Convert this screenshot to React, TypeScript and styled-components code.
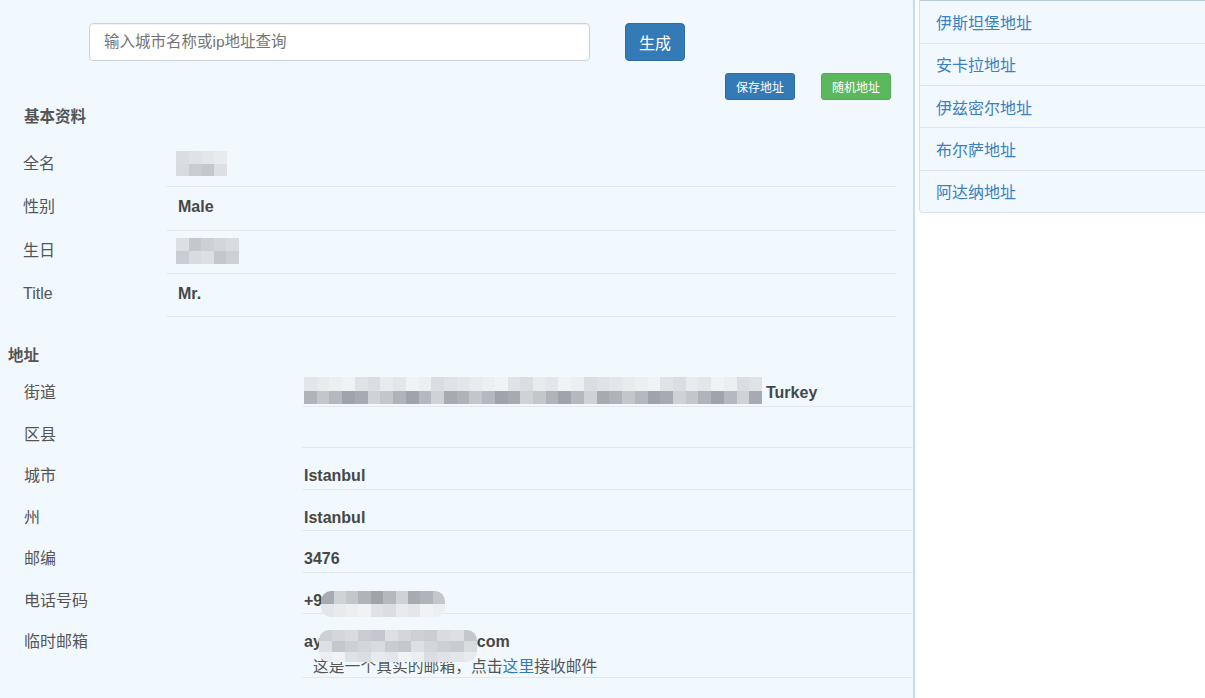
import styled, { createGlobalStyle } from 'styled-components';

const GlobalStyle = createGlobalStyle`
  html, body {
    margin: 0;
    padding: 0;
    background: #ffffff;
  }

  body {
    font-family: 'Liberation Sans', 'Noto Sans CJK SC', sans-serif;
    color: #555555;
  }

  * {
    box-sizing: border-box;
  }
`;

const palettes = {
  light: ['#e3e6ea', '#eceff2', '#dfe2e6', '#e8ebee', '#f0f3f6', '#dadde2'],
  mid: ['#d3d6db', '#c9ccd2', '#dcdfe3', '#cdd0d5', '#d8dbe0', '#c4c7cd'],
  dark: ['#b5b8be', '#a7aab1', '#c3c6cb', '#9fa3aa', '#cfd2d6', '#b0b3b9'],
};

type PaletteName = keyof typeof palettes;

const pickShade = (palette: PaletteName, seed: number) => {
  const list = palettes[palette];
  return list[(seed * 7 + 3) % list.length];
};

interface MosaicProps {
  width: number
  height: number
  lineHeight?: number
  top?: number
  shift?: number
  cols: number
  rows: PaletteName[]
  rounded?: boolean
  seed?: number
}

// pixelated redaction over private data
const Mosaic = ({ width, height, lineHeight = 22, top = 0, shift = 0, cols, rows, rounded, seed = 1 }: MosaicProps) => (
  <MosaicSlot $width={width} $lineHeight={lineHeight} $shift={shift}>
    <MosaicGrid $cols={cols} $rows={rows.length} $height={height} $top={top} $rounded={rounded}>
      {rows.map((palette, r) => Array.from({ length: cols }).map((_, c) => (
        <MosaicCell key={`${r}-${c}`} $shade={pickShade(palette, c * 3 + r * 5 + seed + Math.floor(c / 2))} />
      )))}
    </MosaicGrid>
  </MosaicSlot>
);

const basicRows = [
  { label: '全名', value: 'name' },
  { label: '性别', value: 'Male' },
  { label: '生日', value: 'birthday' },
  { label: 'Title', value: 'Mr.' },
];

const cities = ['伊斯坦堡地址', '安卡拉地址', '伊兹密尔地址', '布尔萨地址', '阿达纳地址'];

export default function App() {
  return (
    <>
      <GlobalStyle />
      <Page>
        <Main>
          <SearchBar>
            <SearchInput placeholder="输入城市名称或ip地址查询" />
            <PrimaryButton type="button">生成</PrimaryButton>
          </SearchBar>

          <ActionRow>
            <SmallButton type="button" $variant="primary">保存地址</SmallButton>
            <SmallButton type="button" $variant="success">随机地址</SmallButton>
          </ActionRow>

          <SectionTitle $indent={24} $gap={4}>基本资料</SectionTitle>
          <InfoTable $labelWidth={166} $right={17}>
            {basicRows.map(row => (
              <InfoRow key={row.label}>
                <Label $indent={23}>{row.label}</Label>
                <BasicValue>
                  {row.value === 'name' && (
                    <Mosaic width={51} height={25} top={-2} shift={-2} cols={4} rows={['light', 'mid']} seed={2} />
                  )}
                  {row.value === 'birthday' && (
                    <Mosaic width={63} height={26} top={-2} shift={-2} cols={5} rows={['mid', 'mid']} seed={5} />
                  )}
                  {row.value !== 'name' && row.value !== 'birthday' && row.value}
                </BasicValue>
              </InfoRow>
            ))}
          </InfoTable>

          <SectionTitle $indent={8} $gap={26}>地址</SectionTitle>
          <AddressTable>
            <AddressRow>
              <Label $indent={24}>街道</Label>
              <AddressValue>
                <Mosaic width={458} height={27} top={-5} cols={36} rows={['light', 'dark']} seed={3} />
                <Shifted>Turkey</Shifted>
              </AddressValue>
            </AddressRow>
            <AddressRow>
              <Label $indent={24}>区县</Label>
              <AddressValue />
            </AddressRow>
            <AddressRow>
              <Label $indent={24}>城市</Label>
              <AddressValue>Istanbul</AddressValue>
            </AddressRow>
            <AddressRow>
              <Label $indent={24}>州</Label>
              <AddressValue>Istanbul</AddressValue>
            </AddressRow>
            <AddressRow>
              <Label $indent={24}>邮编</Label>
              <AddressValue>3476</AddressValue>
            </AddressRow>
            <AddressRow>
              <Label $indent={24}>电话号码</Label>
              <AddressValue>
                +90
                <Mosaic width={124} height={26} top={1} shift={-10} cols={10} rows={['dark', 'light']} rounded seed={4} />
              </AddressValue>
            </AddressRow>
            <AddressRow $tall>
              <Label $indent={24}>临时邮箱</Label>
              <AddressValue>
                <div>
                  ay
                  <Mosaic width={158} height={32} top={-1} shift={-3} cols={12} rows={['mid', 'mid', 'light']} rounded seed={6} />
                  com
                </div>
                <MailHint>
                  这是一个真实的邮箱，点击<HintLink href="#">这里</HintLink>接收邮件
                </MailHint>
              </AddressValue>
            </AddressRow>
          </AddressTable>
        </Main>

        <Side>
          <CityList>
            {cities.map(city => (
              <CityItem key={city}>
                <CityLink href="#">{city}</CityLink>
              </CityItem>
            ))}
          </CityList>
        </Side>
      </Page>
    </>
  );
}

const Page = styled.div`
  display: flex;
  min-height: 698px;
  overflow: hidden;
`;

const Main = styled.div`
  background-color: #f1f8fe;
  border-right: 2px solid #c3ddf2;
  flex: 0 0 915px;
  min-height: 698px;
  padding-top: 23px;
`;

const SearchBar = styled.div`
  align-items: center;
  display: flex;
  gap: 35px;
  padding-left: 89px;
`;

const SearchInput = styled.input`
  background: #ffffff;
  border: 1px solid #cfd3d7;
  border-radius: 4px;
  box-shadow: inset 0 1px 1px rgba(0, 0, 0, 0.05);
  color: #555555;
  font-family: 'Liberation Sans', 'Noto Sans CJK SC', sans-serif;
  font-size: 15.5px;
  height: 38px;
  outline: none;
  padding: 0 14px;
  width: 501px;

  ::placeholder {
    color: #9a9a9a;
  }
`;

const PrimaryButton = styled.button`
  background-color: #337ab7;
  border: 1px solid #2e6da4;
  border-radius: 4px;
  color: #ffffff;
  font-family: 'Noto Sans CJK SC', sans-serif;
  font-size: 16px;
  height: 38px;
  padding: 0;
  width: 60px;
`;

const ActionRow = styled.div`
  display: flex;
  gap: 26px;
  justify-content: flex-end;
  margin-top: 12px;
  padding-right: 22px;
`;

const SmallButton = styled.button<{ $variant: 'primary' | 'success' }>`
  background-color: ${({ $variant }) => ($variant === 'primary' ? '#337ab7' : '#5cb85c')};
  border: 1px solid ${({ $variant }) => ($variant === 'primary' ? '#2e6da4' : '#4cae4c')};
  border-radius: 3px;
  color: #ffffff;
  font-family: 'Noto Sans CJK SC', sans-serif;
  font-size: 12px;
  height: 27px;
  padding: 0;
  width: 70px;
`;

const SectionTitle = styled.div<{ $indent: number, $gap: number }>`
  color: #555555;
  font-family: 'Noto Sans CJK SC', sans-serif;
  font-size: 15.5px;
  font-weight: 700;
  line-height: 22px;
  margin-top: ${({ $gap }) => `${$gap}px`};
  padding-left: ${({ $indent }) => `${$indent}px`};
`;

const InfoTable = styled.div<{ $labelWidth: number, $right: number }>`
  display: grid;
  grid-template-columns: ${({ $labelWidth }) => `${$labelWidth}px`} 1fr;
  margin-right: ${({ $right }) => `${$right}px`};
  margin-top: 18px;
`;

const InfoRow = styled.div`
  display: contents;
`;

const Label = styled.div<{ $indent: number }>`
  color: #555555;
  font-family: 'Liberation Sans', 'Noto Sans CJK SC', sans-serif;
  font-size: 16px;
  line-height: 22px;
  padding-left: ${({ $indent }) => `${$indent}px`};
  padding-top: 9px;
`;

const BasicValue = styled.div`
  border-bottom: 1px solid #e1e8ee;
  color: #474747;
  font-family: 'Liberation Sans', sans-serif;
  font-size: 16px;
  font-weight: 700;
  height: 43.3px;
  line-height: 22px;
  padding-left: 12px;
  padding-top: 9px;
`;

const AddressTable = styled.div`
  display: grid;
  grid-template-columns: 302px 1fr;
`;

const AddressRow = styled.div<{ $tall?: boolean }>`
  display: grid;
  grid-column: 1 / -1;
  grid-template-columns: subgrid;
  min-height: ${({ $tall }) => ($tall ? '64px' : '41.5px')};

  & > div {
    padding-top: 17px;
  }
`;

const AddressValue = styled.div`
  border-bottom: 1px solid #e1e8ee;
  color: #474747;
  font-family: 'Liberation Sans', sans-serif;
  font-size: 16px;
  font-weight: 700;
  line-height: 22px;
  padding-left: 2px;
`;

const Shifted = styled.span`
  margin-left: 4px;
`;

const MailHint = styled.div`
  color: #555555;
  font-family: 'Noto Sans CJK SC', sans-serif;
  font-size: 15.8px;
  font-weight: 400;
  line-height: 22px;
  margin-top: 2px;
  padding-left: 9px;
`;

const HintLink = styled.a`
  color: #337ab7;
  text-decoration: none;
`;

const MosaicSlot = styled.span<{ $width: number, $lineHeight: number, $shift: number }>`
  display: inline-block;
  height: ${({ $lineHeight }) => `${$lineHeight}px`};
  margin-left: ${({ $shift }) => `${$shift}px`};
  position: relative;
  vertical-align: top;
  width: ${({ $width }) => `${$width}px`};
`;

const MosaicGrid = styled.span<{ $cols: number, $rows: number, $height: number, $top: number, $rounded?: boolean }>`
  border-radius: ${({ $rounded }) => ($rounded ? '10px' : '0')};
  display: grid;
  grid-template-columns: repeat(${({ $cols }) => $cols}, 1fr);
  grid-template-rows: repeat(${({ $rows }) => $rows}, 1fr);
  height: ${({ $height }) => `${$height}px`};
  left: 0;
  overflow: hidden;
  position: absolute;
  right: 0;
  top: ${({ $top }) => `${$top}px`};
  z-index: 1;
`;

const MosaicCell = styled.span<{ $shade: string }>`
  background-color: ${({ $shade }) => $shade};
`;

const Side = styled.div`
  flex: 1;
  padding-left: 4px;
`;

const CityList = styled.ul`
  background-color: #f1f8fe;
  border: 1px solid #d9e2ea;
  border-radius: 0 0 0 4px;
  border-top-color: #b9cbdc;
  list-style: none;
  margin: 0 -10px 0 0;
  padding: 0;
`;

const CityItem = styled.li`
  align-items: center;
  border-top: 1px solid #dde5ec;
  display: flex;
  height: 42.4px;
  padding-left: 16px;

  &:first-child {
    border-top: none;
    height: 41.5px;
  }
`;

const CityLink = styled.a`
  color: #3a80c2;
  font-family: 'Noto Sans CJK SC', sans-serif;
  font-size: 16px;
  text-decoration: none;
`;
